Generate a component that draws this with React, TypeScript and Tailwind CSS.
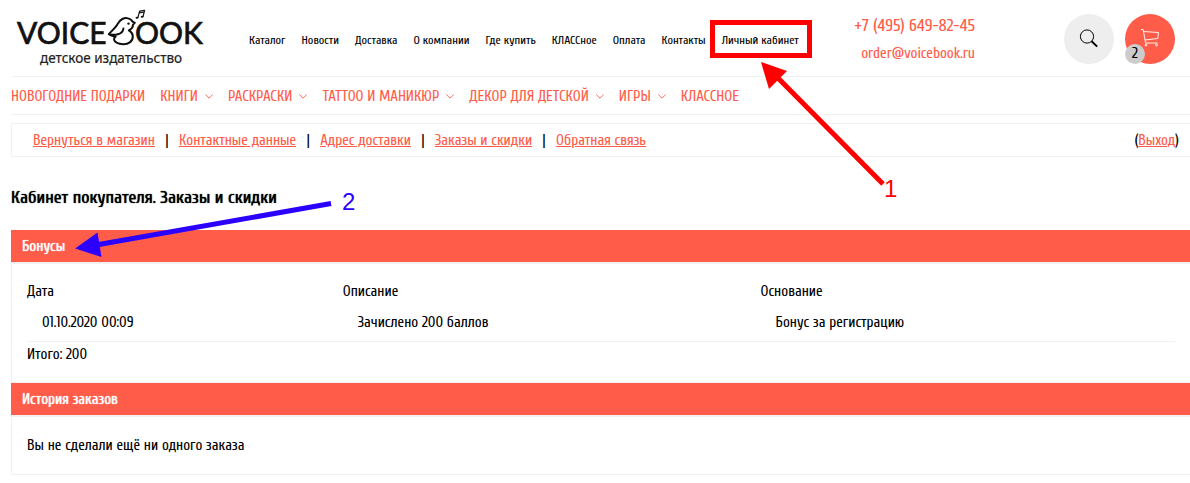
import React from "react";

const topLinks = ["Каталог", "Новости", "Доставка", "О компании", "Где купить", "КЛАССное", "Оплата", "Контакты"];

const categories = [
  { label: "НОВОГОДНИЕ ПОДАРКИ", menu: false },
  { label: "КНИГИ", menu: true },
  { label: "РАСКРАСКИ", menu: true },
  { label: "ТАТТОО И МАНИКЮР", menu: true },
  { label: "ДЕКОР ДЛЯ ДЕТСКОЙ", menu: true },
  { label: "ИГРЫ", menu: true },
  { label: "КЛАССНОЕ", menu: false },
];

const accountLinks = ["Вернуться в магазин", "Контактные данные", "Адрес доставки", "Заказы и скидки", "Обратная связь"];

function Logo() {
  return (
    <a href="#" aria-label="VOICEBOOK детское издательство" className="block shrink-0">
      <svg width="200" height="62" viewBox="11 6 200 62" className="block">
        <g fill="#111" stroke="#111" strokeWidth="0.7" fontFamily="Lato, sans-serif" fontSize="30">
          <text x="17" y="44">VOICE</text>
          <text x="135" y="44">OOK</text>
        </g>
        <g fill="none" stroke="#111" strokeWidth="2" strokeLinecap="round" strokeLinejoin="round">
          <path d="M132.600 21.600 C130.500 18.200 126 17.200 122.400 19 C119.400 20.400 118.600 22.800 116.800 25.400 C114.600 28.600 111.300 31.200 108.800 34.200 C111.200 35.800 113.600 36.400 115.600 36.600 C112.800 38.400 114 41 116.600 42.600 C120 44.600 126.500 45 129.800 42.400 C134.200 38.800 133.800 33 128.800 30.400 C131.800 29.200 133 27 133 24.600 L134.800 22.800 Z" />
          <path d="M109.500 34.200 C114 35.600 122.600 35 123.400 28.600" />
          <path d="M137.900 17.600 L139.600 11.200 L144.600 10.400 L143 16.600 M139.300 12.800 L144.200 12" strokeWidth="1.200" />
        </g>
        <circle cx="128.500" cy="23.600" r="1.200" fill="#111" />
        <ellipse cx="137" cy="17.800" rx="1.400" ry="1" fill="#111" />
        <ellipse cx="142.100" cy="16.800" rx="1.400" ry="1" fill="#111" />
        <text x="40" y="63" fill="#222" stroke="#222" strokeWidth="0.200" fontFamily="'Noto Sans', sans-serif" fontSize="13.500">детское издательство</text>
      </svg>
    </a>
  );
}

function Chevron() {
  return (
    <svg width="8" height="5" viewBox="0 0 8 5" fill="none" stroke="#ff5c49" strokeWidth="0.9" aria-hidden="true">
      <path d="M0.3 0.5 L4 4.200 L7.700 0.5" />
    </svg>
  );
}

function SectionTitle({ children }: { children: React.ReactNode }) {
  return (
    <h2 className="h-8 bg-[#ff5c49] px-[11px] pt-px text-[15px] leading-8 font-normal text-white [text-shadow:0_0_1px_currentColor]">
      {children}
    </h2>
  );
}

function Annotations() {
  return (
    <svg width="900" height="270" viewBox="0 0 900 270" className="pointer-events-none absolute top-0 left-0" aria-hidden="true">
      <path d="M883 184 L776 76" stroke="#ff0000" strokeWidth="5" />
      <path d="M761 62 L787 71 L769 89 Z" fill="#ff0000" />
      <path d="M331 203.500 L96 245" stroke="#2b00ff" strokeWidth="5" />
      <path d="M75 248.500 L97.500 232.500 L101.500 257 Z" fill="#2b00ff" />
      <g fontFamily="'Liberation Sans', sans-serif" fontSize="24">
        <text x="884" y="197" fill="#ff0000">1</text>
        <text x="342" y="210" fill="#2b00ff">2</text>
      </g>
    </svg>
  );
}

export default function App() {
  return (
    <div className="relative bg-white pb-2 pl-[11px] font-[Cuprum,'Roboto_Condensed',sans-serif] text-[15px] leading-6 text-black">
      <header className="flex h-[77px] items-start border-b border-[#f1f1f1] pr-[15px]">
        <div className="w-[238px] shrink-0 pt-[6px]">
          <Logo />
        </div>
        <nav className="flex gap-4 pt-8 text-xs leading-4 whitespace-nowrap">
          {topLinks.map((label) => (
            <a key={label} href="#">{label}</a>
          ))}
          <a href="#" className="relative">
            Личный кабинет
            <span className="absolute -top-3 -right-[13px] -bottom-[10px] -left-3 border-5 border-[#ff0000]" />
          </a>
        </nav>
        <div className="ml-auto flex gap-[89px] pt-[14px]">
          <div className="flex flex-col items-end gap-[6px] whitespace-nowrap text-[#ff5c49]">
            <a href="tel:+74956498245" className="text-[17px] leading-6">+7 (495) 649-82-45</a>
            <a href="mailto:order@voicebook.ru" className="leading-5">order@voicebook.ru</a>
          </div>
          <div className="flex gap-[11px]">
            <button type="button" aria-label="Поиск" className="flex size-[50px] items-center justify-center rounded-full bg-[#eee]">
              <svg width="20" height="20" viewBox="0 0 20 20" fill="none" stroke="#000">
                <circle cx="8" cy="7.500" r="6.600" strokeWidth="1" />
                <path d="M12.600 12.200 L18.200 17.600" strokeWidth="2" />
              </svg>
            </button>
            <button type="button" aria-label="Корзина" className="relative flex size-[50px] items-center justify-center rounded-full bg-[#ff5c49]">
              <svg width="20" height="20" viewBox="0 0 20 20" fill="none" stroke="#fff" strokeWidth="0.9">
                <path d="M1 -0.500 H3.200 L5.500 13 H17.500 M3.600 1.500 L18.500 2.500 L17.800 8.500 L5 10" className="translate-y-px" />
                <circle cx="6" cy="16" r="1" />
                <circle cx="16.500" cy="16" r="1" />
              </svg>
              <span className="absolute bottom-0 left-0 size-5 rounded-full bg-[#ccc] text-[15px] leading-5">2</span>
            </button>
          </div>
        </div>
      </header>

      <nav className="flex h-[38px] items-center gap-[15px] border-b border-[#f1f1f1] pt-[2px] whitespace-nowrap text-[#ff5c49]">
        {categories.map(({ label, menu }) => (
          <a key={label} href="#" className="flex items-center gap-[7px]">
            {label}
            {menu && <Chevron />}
          </a>
        ))}
      </nav>

      <nav className="mt-2 flex h-[34px] items-center justify-between border border-r-0 border-[#f1f1f1] pt-[2px] pr-[11px] pl-[21px] whitespace-nowrap">
        <ul className="flex">
          {accountLinks.map((label, i) => (
            <li key={label} className="flex">
              {i > 0 && <span className="w-6 text-center">|</span>}
              <a href="#" className="text-[#ff5c49] underline">{label}</a>
            </li>
          ))}
        </ul>
        <span>(<a href="#" className="text-[#ff5c49] underline">Выход</a>)</span>
      </nav>

      <main>
        <h1 className="mt-[29px] mb-5 text-lg leading-6 font-normal [text-shadow:0_0_1px_currentColor]">Кабинет покупателя. Заказы и скидки</h1>
        <section>
          <SectionTitle>Бонусы</SectionTitle>
          <div className="border-t-2 border-b border-l border-[#f1f1f1] px-[15px] pt-3 pb-[15px]">
            <table className="w-full table-fixed text-left">
              <colgroup>
                <col className="w-[27.500%]" />
                <col className="w-[36.400%]" />
                <col />
              </colgroup>
              <thead>
                <tr className="h-[31px]">
                  <th className="font-normal">Дата</th>
                  <th className="font-normal">Описание</th>
                  <th className="font-normal">Основание</th>
                </tr>
              </thead>
              <tbody>
                <tr className="h-[34px] border-b border-[#f1f1f1]">
                  <td className="pb-[2px] pl-[15px]">01.10.2020 00:09</td>
                  <td className="pb-[2px] pl-[15px]">Зачислено 200 баллов</td>
                  <td className="pb-[2px] pl-[15px]">Бонус за регистрацию</td>
                </tr>
              </tbody>
            </table>
            <p className="pt-px">Итого: 200</p>
          </div>
        </section>
        <section>
          <SectionTitle>История заказов</SectionTitle>
          <div className="border-t-2 border-b border-l border-[#f1f1f1] px-[15px] py-4">
            <p className="pt-px">Вы не сделали ещё ни одного заказа</p>
          </div>
        </section>
      </main>
      <Annotations />
    </div>
  );
}
